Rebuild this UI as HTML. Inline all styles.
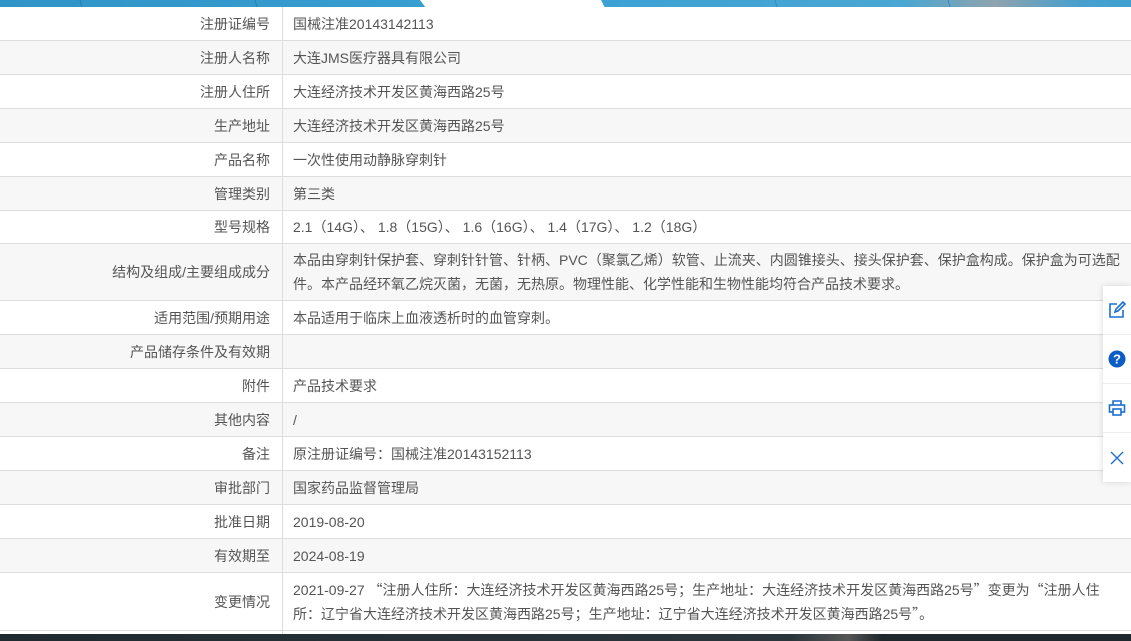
<!DOCTYPE html>
<html><head><meta charset="utf-8"><style>
*{margin:0;padding:0;box-sizing:border-box}
body{width:1131px;height:641px;overflow:hidden;background:#fff;font-family:"Liberation Sans","Noto Sans CJK SC",sans-serif;font-size:14px;color:#555;position:relative}
.p{font-family:"Noto Sans CJK SC",sans-serif}
.top{position:absolute;left:0;top:0;width:1131px;height:7px;background:linear-gradient(90deg,#2f94c6 0%,#3aa1d4 50%,#4aa6d2 80%,#8fa3ad 88%,#4a9fcc 95%,#3fa0d0 100%)}
.notch{position:absolute;left:0;top:0;width:1131px;height:8px}
.row{position:absolute;left:0;width:1131px;border-bottom:1px solid #ddd}
.row.g{background:#f7f7f7}
.l{position:absolute;left:0;width:283px;top:0;bottom:0;border-right:1px solid #ddd;text-align:right;padding-right:12px;display:flex;align-items:center;justify-content:flex-end}
.v{position:absolute;left:293px;right:12px;top:0;bottom:0;display:flex;align-items:center;line-height:24px}
.bot{position:absolute;left:0;top:634px;width:1131px;height:7px;background:linear-gradient(90deg,#1f2a30,#2a353b 70%,#555 75%,#1e272c 78%)}
.side{position:absolute;left:1103px;top:286px;width:28px;height:196px;background:#fff;box-shadow:0 0 6px rgba(0,0,0,.15)}
.side div{height:49px;border-bottom:1px solid #eee;display:flex;align-items:center;justify-content:center}
</style></head><body>
<div class="top"></div>
<svg class="notch" viewBox="0 0 1131 8"><polygon points="420,0 601,0 605,8 426,8" fill="#fff"/><line x1="80" y1="0" x2="82" y2="7" stroke="#2580b0" stroke-width="1"/><line x1="255" y1="0" x2="257" y2="7" stroke="#2580b0"/><line x1="775" y1="0" x2="777" y2="7" stroke="#2f8fc0"/><line x1="948" y1="0" x2="950" y2="7" stroke="#2f8fc0"/></svg>

<div class="row" style="top:7px;height:34px"><div class="l">注册证编号</div><div class="v">国械注准20143142113</div></div>
<div class="row g" style="top:41px;height:34px"><div class="l">注册人名称</div><div class="v">大连JMS医疗器具有限公司</div></div>
<div class="row" style="top:75px;height:34px"><div class="l">注册人住所</div><div class="v">大连经济技术开发区黄海西路25号</div></div>
<div class="row g" style="top:109px;height:34px"><div class="l">生产地址</div><div class="v">大连经济技术开发区黄海西路25号</div></div>
<div class="row" style="top:143px;height:34px"><div class="l">产品名称</div><div class="v">一次性使用动静脉穿刺针</div></div>
<div class="row g" style="top:177px;height:34px"><div class="l">管理类别</div><div class="v">第三类</div></div>
<div class="row" style="top:211px;height:33px"><div class="l">型号规格</div><div class="v"><span>2.1<span class="p">（</span>14G<span class="p">）、</span>&nbsp;1.8<span class="p">（</span>15G<span class="p">）、</span>&nbsp;1.6<span class="p">（</span>16G<span class="p">）、</span>&nbsp;1.4<span class="p">（</span>17G<span class="p">）、</span>&nbsp;1.2<span class="p">（</span>18G<span class="p">）</span></span></div></div>
<div class="row g" style="top:244px;height:57px"><div class="l">结构及组成/主要组成成分</div><div class="v" style="right:2px">本品由穿刺针保护套、穿刺针针管、针柄、PVC（聚氯乙烯）软管、止流夹、内圆锥接头、接头保护套、保护盒构成。保护盒为可选配件。本产品经环氧乙烷灭菌，无菌，无热原。物理性能、化学性能和生物性能均符合产品技术要求。</div></div>
<div class="row" style="top:301px;height:34px"><div class="l">适用范围/预期用途</div><div class="v">本品适用于临床上血液透析时的血管穿刺。</div></div>
<div class="row g" style="top:335px;height:34px"><div class="l">产品储存条件及有效期</div><div class="v"></div></div>
<div class="row" style="top:369px;height:34px"><div class="l">附件</div><div class="v">产品技术要求</div></div>
<div class="row g" style="top:403px;height:34px"><div class="l">其他内容</div><div class="v">/</div></div>
<div class="row" style="top:437px;height:34px"><div class="l">备注</div><div class="v">原注册证编号：国械注准20143152113</div></div>
<div class="row g" style="top:471px;height:34px"><div class="l">审批部门</div><div class="v">国家药品监督管理局</div></div>
<div class="row" style="top:505px;height:34px"><div class="l">批准日期</div><div class="v">2019-08-20</div></div>
<div class="row g" style="top:539px;height:34px"><div class="l">有效期至</div><div class="v">2024-08-19</div></div>
<div class="row" style="top:573px;height:58px"><div class="l">变更情况</div><div class="v"><span>2021-09-27 <span class="p">“</span>注册人住所：大连经济技术开发区黄海西路25号；生产地址：大连经济技术开发区黄海西路25号<span class="p">”</span>变更为<span class="p">“</span>注册人住所：辽宁省大连经济技术开发区黄海西路25号；生产地址：辽宁省大连经济技术开发区黄海西路25号<span class="p">”</span>。</span></div></div>
<div class="row" style="top:631px;height:10px;border:none"><div class="l"></div></div>
<div class="bot"></div>

<div class="side">
<div><svg width="18" height="18" viewBox="0 0 18 18" fill="none" stroke="#1a6fd0" stroke-width="1.6"><path d="M9 3H2v13h13V9"/><path d="M7 11l1-3 7-7 2 2-7 7z"/></svg></div>
<div><svg width="18" height="18" viewBox="0 0 18 18"><circle cx="9" cy="9" r="8.5" fill="#0b5cc4"/><text x="9" y="13.5" font-size="13" font-weight="bold" fill="#fff" text-anchor="middle" font-family="Liberation Sans">?</text></svg></div>
<div><svg width="18" height="18" viewBox="0 0 18 18" fill="none" stroke="#1a6fd0" stroke-width="1.6"><path d="M5 6V2h8v4"/><rect x="1.5" y="6" width="15" height="7"/><rect x="5" y="10" width="8" height="6" fill="#fff"/></svg></div>
<div style="border:none"><svg width="14" height="14" viewBox="0 0 14 14" stroke="#1a6fd0" stroke-width="1.3"><path d="M1 1l12 12M13 1L1 13"/></svg></div>
</div>
</body></html>
